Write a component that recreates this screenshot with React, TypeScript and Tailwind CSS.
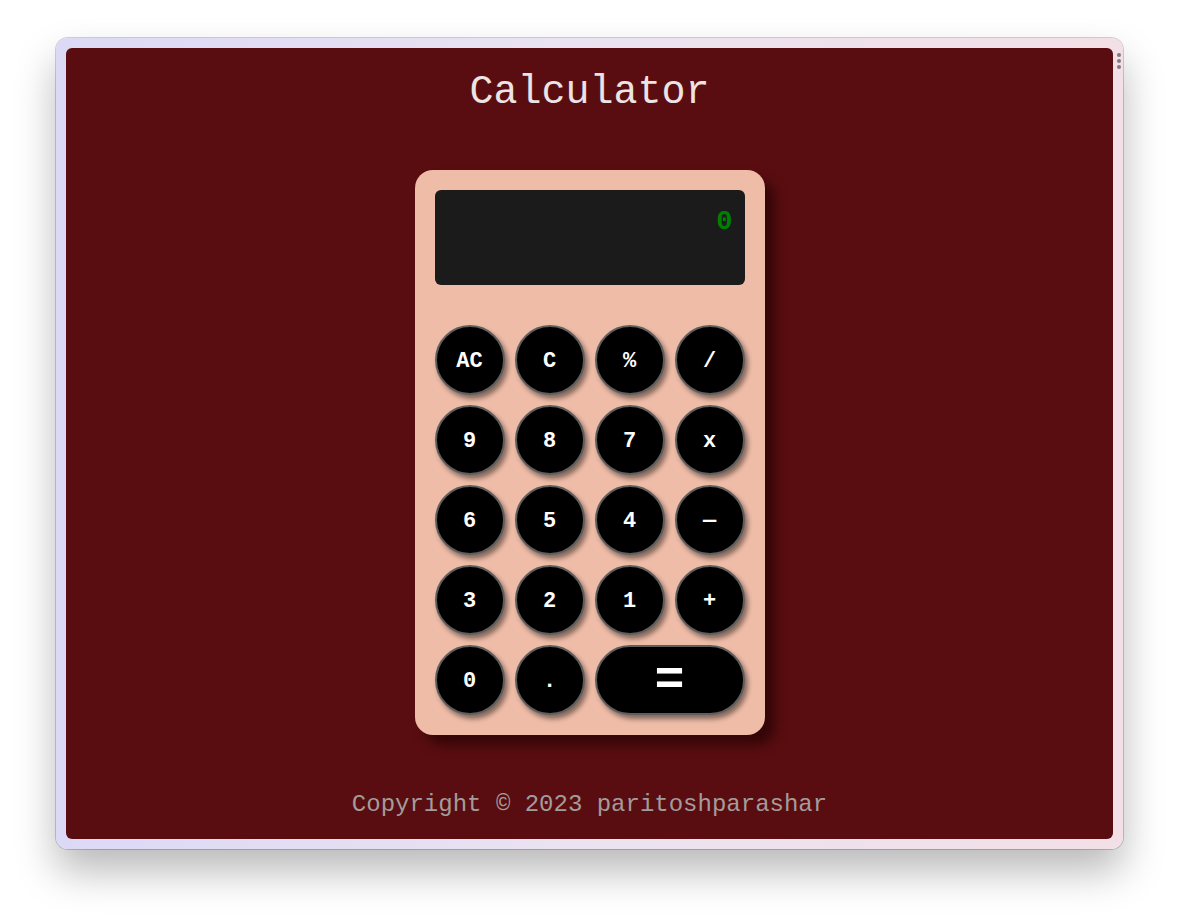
import React from "react";

const mono = { fontFamily: '"Liberation Mono", "Courier New", monospace' };

const rows: string[][] = [
  ["AC", "C", "%", "/"],
  ["9", "8", "7", "x"],
  ["6", "5", "4", "—"],
  ["3", "2", "1", "+"],
];

function Key({ label, wide }: { label: string; wide?: boolean }) {
  return (
    <button
      className={`${wide ? "col-span-2 w-[150px] rounded-[35px]" : "w-[70px] rounded-full"} h-[70px] bg-black border-2 border-[#5e5e5e] shadow-[3px_4px_5px_rgba(0,0,0,0.45)] text-white font-bold flex items-center justify-center pt-[3px]`}
      style={mono}
    >
      <span className={wide ? "text-[50px] leading-none" : "text-[22px] leading-none"}>{label}</span>
    </button>
  );
}

export default function App() {
  return (
    <div className="w-[1179px] h-[923px] bg-white pt-[38px] pl-[56px]">
      <div className="w-[1067px] h-[811px] rounded-[12px] p-[10px] bg-gradient-to-r from-[#dcd9f6] via-[#ebe3f1] to-[#f3dfe6] shadow-[0_22px_40px_rgba(0,0,0,0.28),0_0_0_1px_#d4cfdc] relative">
        <div className="absolute right-[2px] top-[15px] flex flex-col gap-[2px]">
          <div className="w-[4px] h-[4px] rounded-full bg-[#7f7a80]" />
          <div className="w-[4px] h-[4px] rounded-full bg-[#7f7a80]" />
          <div className="w-[4px] h-[4px] rounded-full bg-[#7f7a80]" />
        </div>
        <div className="w-full h-full rounded-[6px] bg-[#5a0d10] flex flex-col items-center">
          <h1 className="text-[40px] leading-none text-[#ebe4e4] mt-[25px]" style={mono}>
            Calculator
          </h1>
          <div className="mt-[57px] w-[350px] h-[565px] rounded-[18px] bg-[#efbca8] p-[20px] shadow-[10px_10px_12px_rgba(20,0,0,0.55)]">
            <div className="h-[95px] rounded-[6px] bg-[#1b1b1b] flex justify-end items-start pt-[19px] pr-[12px]">
              <span className="text-[27px] leading-none text-[#008000] font-bold" style={mono}>
                0
              </span>
            </div>
            <div className="mt-[40px] grid grid-cols-4 gap-[10px]">
              {rows.flat().map((l, i) => (
                <Key key={i} label={l} />
              ))}
              <Key label="0" />
              <Key label="." />
              <Key label="=" wide />
            </div>
          </div>
          <p className="mt-[58px] text-[24px] leading-none text-[#a49c9c]" style={mono}>
            Copyright © 2023 paritoshparashar
          </p>
        </div>
      </div>
    </div>
  );
}
